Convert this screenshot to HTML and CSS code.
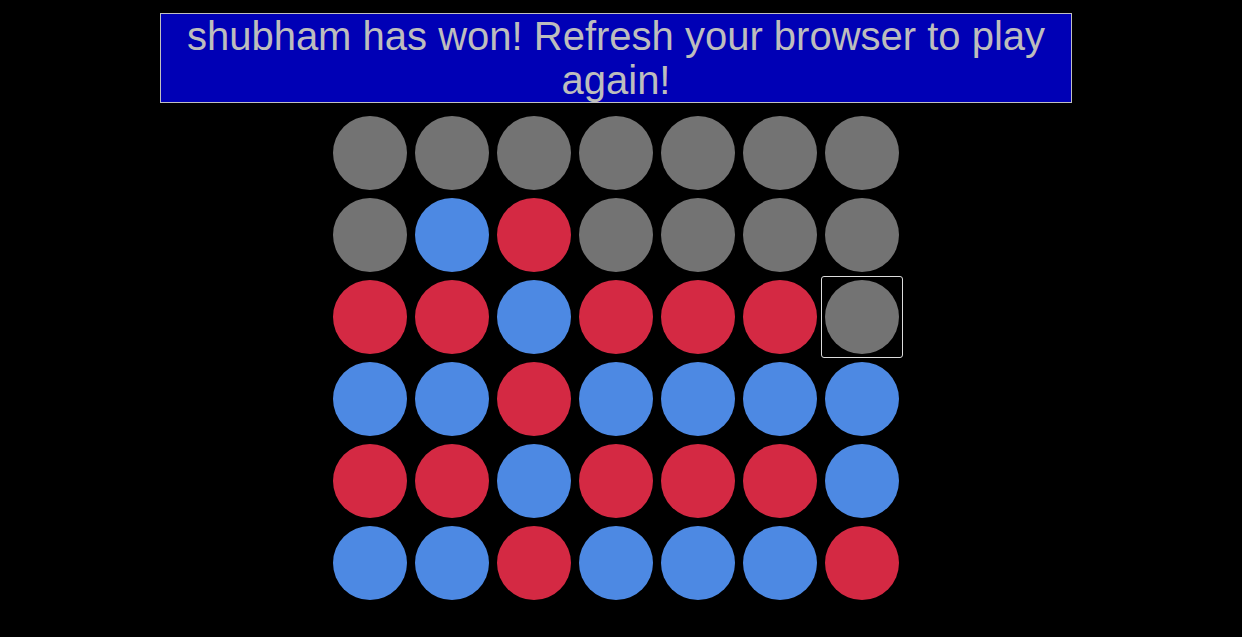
FILE: index.html
```html
<!DOCTYPE html>
<html>
<head>
<meta charset="utf-8">
<link rel="stylesheet" href="styles.css">
</head>
<body>
<h1 class="banner">shubham has won! Refresh your browser to play again!</h1>
<div class="board">
  <div class="row">
    <div class="cell"><div class="disc g"></div></div>
    <div class="cell"><div class="disc g"></div></div>
    <div class="cell"><div class="disc g"></div></div>
    <div class="cell"><div class="disc g"></div></div>
    <div class="cell"><div class="disc g"></div></div>
    <div class="cell"><div class="disc g"></div></div>
    <div class="cell"><div class="disc g"></div></div>
  </div>
  <div class="row">
    <div class="cell"><div class="disc g"></div></div>
    <div class="cell"><div class="disc b"></div></div>
    <div class="cell"><div class="disc r"></div></div>
    <div class="cell"><div class="disc g"></div></div>
    <div class="cell"><div class="disc g"></div></div>
    <div class="cell"><div class="disc g"></div></div>
    <div class="cell"><div class="disc g"></div></div>
  </div>
  <div class="row">
    <div class="cell"><div class="disc r"></div></div>
    <div class="cell"><div class="disc r"></div></div>
    <div class="cell"><div class="disc b"></div></div>
    <div class="cell"><div class="disc r"></div></div>
    <div class="cell"><div class="disc r"></div></div>
    <div class="cell"><div class="disc r"></div></div>
    <div class="cell hover"><div class="disc g"></div></div>
  </div>
  <div class="row">
    <div class="cell"><div class="disc b"></div></div>
    <div class="cell"><div class="disc b"></div></div>
    <div class="cell"><div class="disc r"></div></div>
    <div class="cell"><div class="disc b"></div></div>
    <div class="cell"><div class="disc b"></div></div>
    <div class="cell"><div class="disc b"></div></div>
    <div class="cell"><div class="disc b"></div></div>
  </div>
  <div class="row">
    <div class="cell"><div class="disc r"></div></div>
    <div class="cell"><div class="disc r"></div></div>
    <div class="cell"><div class="disc b"></div></div>
    <div class="cell"><div class="disc r"></div></div>
    <div class="cell"><div class="disc r"></div></div>
    <div class="cell"><div class="disc r"></div></div>
    <div class="cell"><div class="disc b"></div></div>
  </div>
  <div class="row">
    <div class="cell"><div class="disc b"></div></div>
    <div class="cell"><div class="disc b"></div></div>
    <div class="cell"><div class="disc r"></div></div>
    <div class="cell"><div class="disc b"></div></div>
    <div class="cell"><div class="disc b"></div></div>
    <div class="cell"><div class="disc b"></div></div>
    <div class="cell"><div class="disc r"></div></div>
  </div>
</div>
</body>
</html>
```
FILE: styles.css
```css
html, body {
  background: #000;
}
body {
  margin: 8px 18px 8px 8px;
  font-family: "Liberation Sans", Arial, sans-serif;
}
.banner {
  box-sizing: border-box;
  width: 75%;
  margin: 5px auto 0;
  background: #0000b5;
  border: 1px solid #c0c0c0;
  color: #bdbdbd;
  font-size: 40px;
  font-weight: normal;
  text-align: center;
  line-height: 44px;
}
.board {
  display: flex;
  flex-direction: column;
  align-items: center;
  margin-top: 9px;
}
.row {
  display: flex;
}
.cell {
  width: 82px;
  height: 82px;
  box-sizing: border-box;
  border: 1px solid transparent;
  border-radius: 3px;
  display: flex;
  align-items: center;
  justify-content: center;
}
.cell.hover {
  border-color: #dcdcdc;
}
.disc {
  width: 74px;
  height: 74px;
  border-radius: 50%;
  flex: none;
}
.g { background: #737373; }
.b { background: #4d89e3; }
.r { background: #d42943; }
```
